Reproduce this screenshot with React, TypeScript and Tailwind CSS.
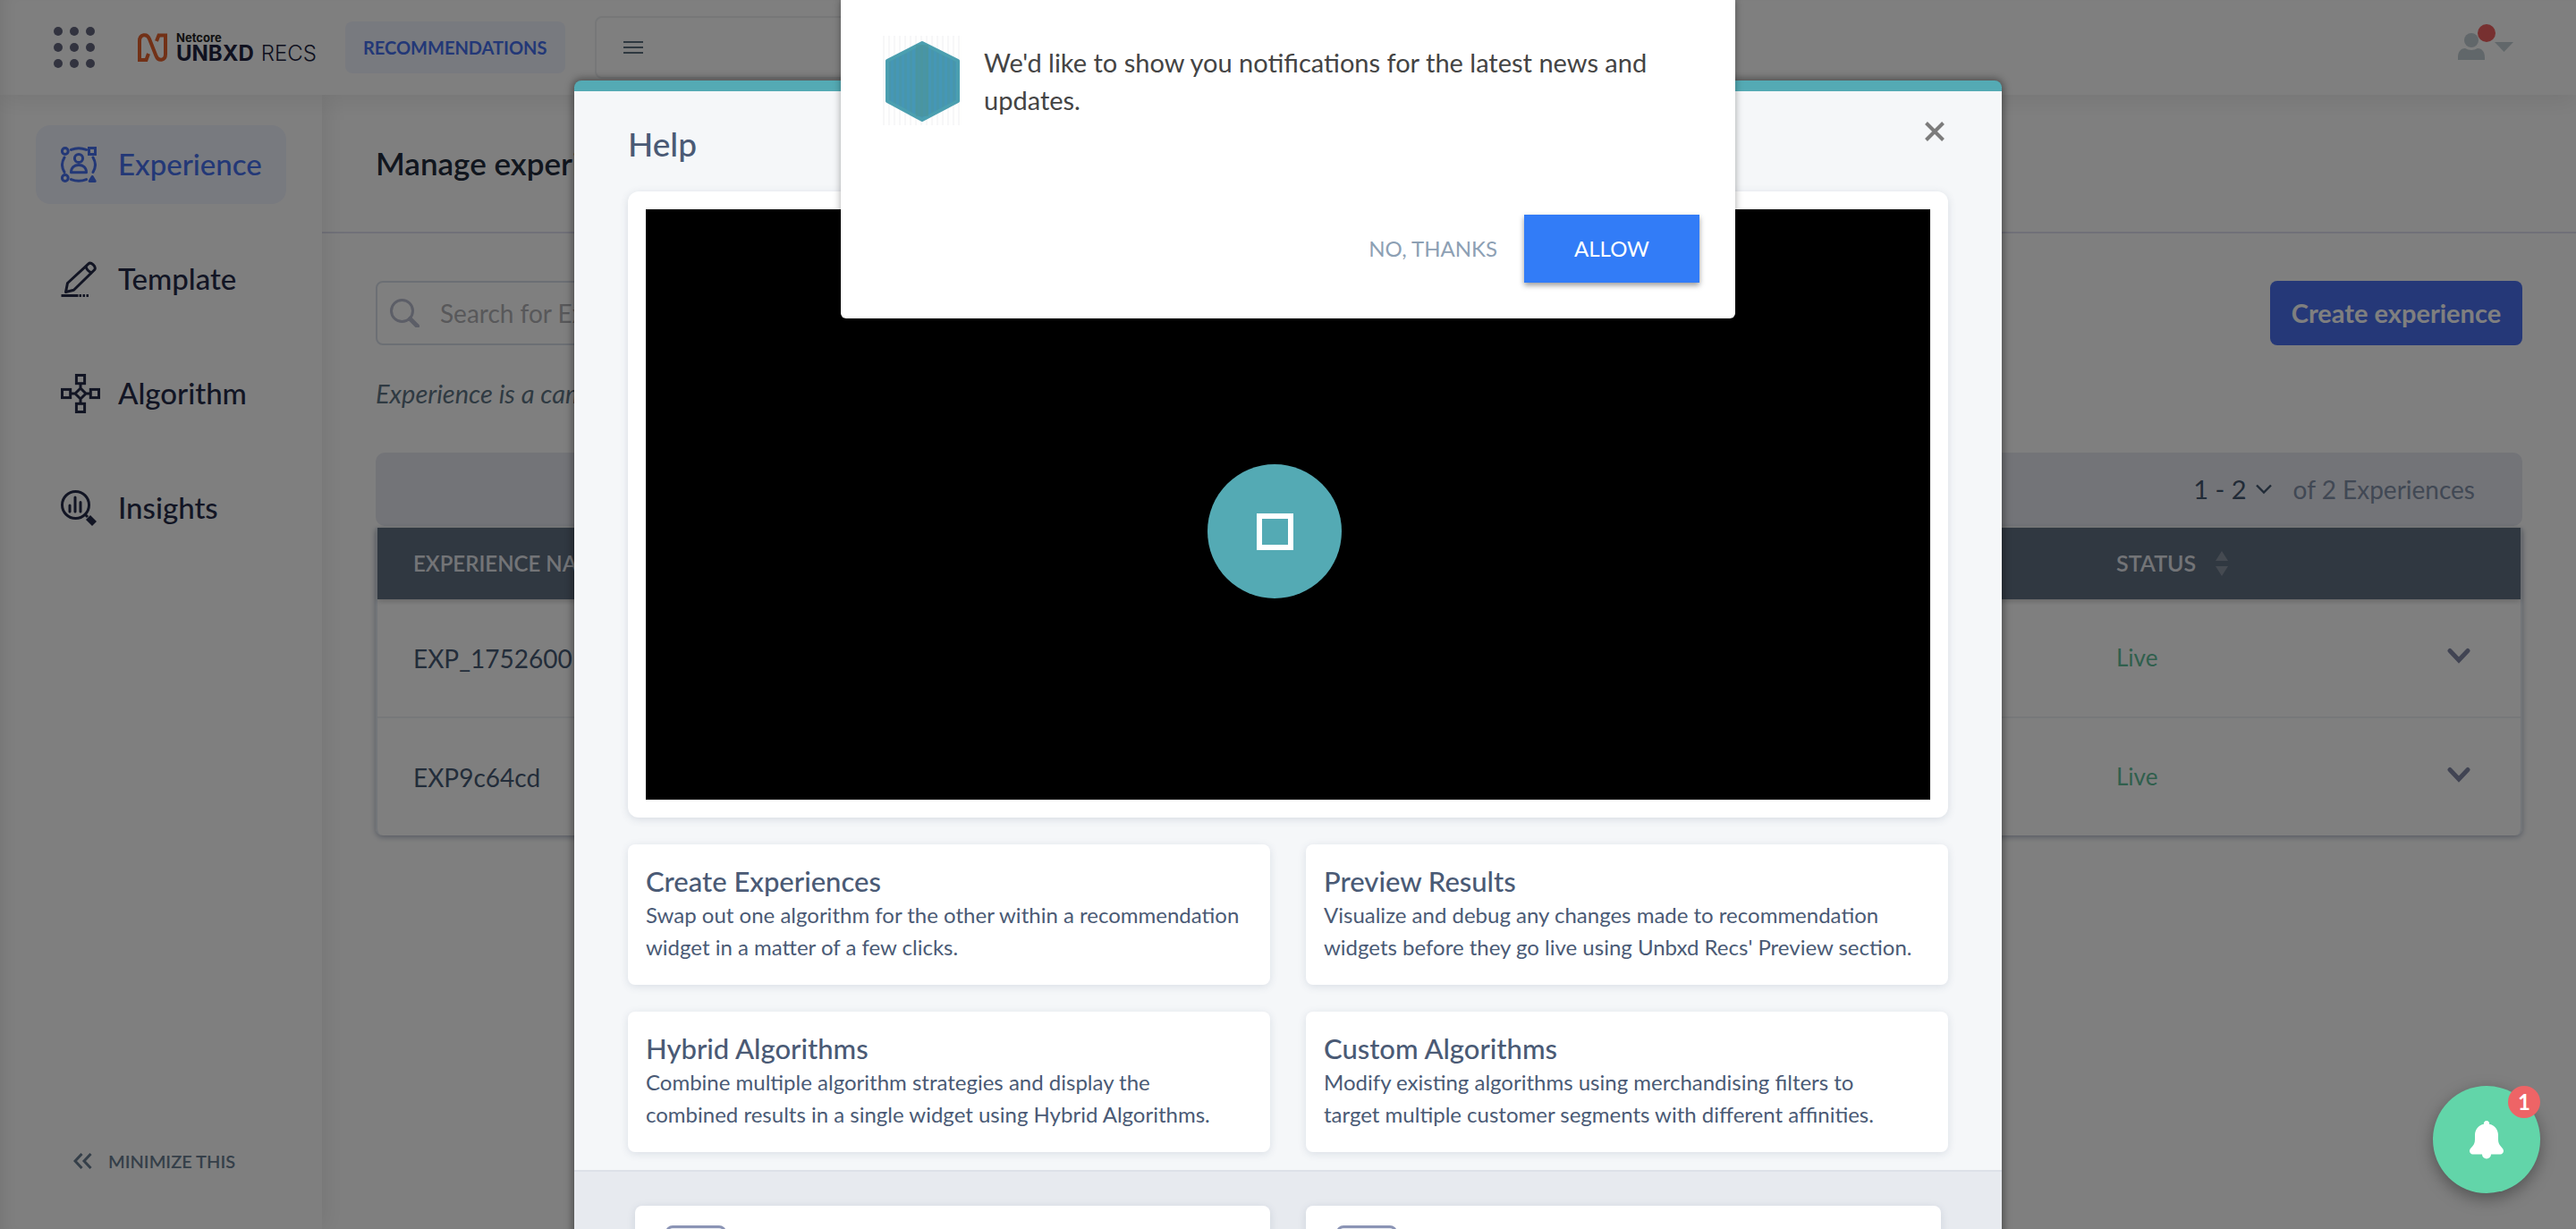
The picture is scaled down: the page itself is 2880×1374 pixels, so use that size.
import type { ReactNode } from 'react';

const logoFont = 'font-[Inter,sans-serif]';

function ExperienceIcon() {
  return (
    <svg viewBox="0 0 40 40" className="size-10" fill="none" stroke="currentColor" strokeWidth="3">
      <circle cx="4.800" cy="5" r="3.400" />
      <circle cx="4.800" cy="35" r="3.400" />
      <rect x="31.500" y="1.500" width="7" height="7" />
      <path d="M35.200 33.500l-3 5h6z" strokeLinejoin="round" />
      <path d="M11.500 3.400q8.500-3.400 17 0M11.500 36.600q8.500 3.400 17 0M4 12q-5 8.500 0 16.500M36 12q5 8.500 0 16.500" strokeLinecap="round" />
      <circle cx="20" cy="13" r="4.600" />
      <path d="M11.500 28.800c0-5.500 3.500-8.300 8.500-8.300s8.500 2.800 8.500 8.300z" strokeLinejoin="round" />
    </svg>
  );
}

function TemplateIcon() {
  return (
    <svg viewBox="0 0 40 40" className="size-10" fill="none" stroke="currentColor" strokeWidth="3" strokeLinejoin="round">
      <path d="M5.500 34.500l2-10L31 2.800c2.500-2.300 9 3.200 6.800 6.700L14.500 32.300z" />
      <path d="M28 6c1 4 3.500 6 7 7" />
      <path d="M0.500 38.500h19" />
      <path d="M20.500 38.500h2.500M24.500 38.500h2.500M28.500 38.500h2.500" />
    </svg>
  );
}

function AlgorithmIcon() {
  return (
    <svg viewBox="0 0 44 44" className="size-11" fill="none" stroke="currentColor" strokeWidth="3">
      <rect x="17.400" y="1.500" width="9.200" height="9.200" />
      <rect x="17.400" y="33.300" width="9.200" height="9.200" />
      <rect x="1.500" y="17.400" width="9.200" height="9.200" />
      <rect x="33.300" y="17.400" width="9.200" height="9.200" />
      <path d="M22 16l6 6-6 6-6-6zM22 10.700V16M22 28v5.300M10.700 22H16M28 22h5.300" />
    </svg>
  );
}

function InsightsIcon() {
  return (
    <svg viewBox="0 0 40 40" className="size-10" fill="none" stroke="currentColor" strokeWidth="3">
      <circle cx="16.500" cy="16.500" r="15" />
      <path d="M10 17v7M16 8v16M22 13.500V24" strokeLinecap="round" />
      <path d="M27 27l3 3" />
      <path d="M30.500 30.500l7 7" strokeWidth="7" />
    </svg>
  );
}

function NavItem({ icon, label, active = false }: { icon: ReactNode; label: string; active?: boolean }) {
  return (
    <a
      href="#"
      className={
        active
          ? 'flex h-[88px] items-center gap-5 rounded-2xl bg-[#f1f4ff] pl-7 text-[33px] font-medium text-[#4670ee]'
          : 'flex h-[88px] items-center gap-5 rounded-2xl pl-7 text-[33px] font-medium text-[#252b48]'
      }
    >
      <span className="flex w-11 shrink-0 items-center">{icon}</span>
      {label}
    </a>
  );
}

function Header() {
  return (
    <header className="relative z-10 flex h-[106px] shrink-0 items-center bg-white pl-[60px] pr-[70px] shadow-[0_8px_24px_rgba(0,0,0,0.07)]">
      <button aria-label="Apps" className="text-[#64677f]">
        <svg viewBox="0 0 46 46" className="size-[46px]" fill="currentColor">
          {[5, 23, 41].map((y) => [5, 23, 41].map((x) => <circle key={`${x}-${y}`} cx={x} cy={y} r="5" />))}
        </svg>
      </button>
      <div className="ml-12 flex items-center gap-2.5">
        <svg viewBox="0 0 33 32" className="h-8 w-[33px]" fill="none" stroke="#e4632f" strokeWidth="4">
          <path d="M12 23L9.500 30H2V9C2 1 10.500 0 13 6.500L20.500 25.500C23 32 31 31 31 23.500V2.500H23.500L21 9" />
        </svg>
        <div className={`${logoFont} text-[#20233f]`}>
          <div className="text-[13px] leading-[14px] font-bold text-[#222]">Netcore</div>
          <div className="flex gap-2 text-[24px] leading-[22px]">
            <span className="font-bold">UNBXD</span>
            <span className="font-light">RECS</span>
          </div>
        </div>
      </div>
      <span className="ml-8 flex h-[58px] items-center rounded-lg bg-[#f1f4ff] px-5 text-[20px] font-bold text-[#4670ee]">
        RECOMMENDATIONS
      </span>
      <button aria-label="Menu" className="ml-[33px] flex h-[70px] w-[900px] items-center rounded-lg border-2 border-[#eceef0] pl-[30px] text-[#5c7080]">
        <svg viewBox="0 0 22 16" className="h-4 w-[22px]" stroke="currentColor" strokeWidth="2">
          <path d="M0 2h22M0 8h22M0 14h22" />
        </svg>
      </button>
      <button aria-label="Account" className="mb-3 ml-auto text-[#c3ced4]">
        <svg viewBox="0 0 66 42" className="h-[42px] w-[66px]" fill="currentColor">
          <circle cx="19" cy="19" r="8" />
          <path d="M4 41v-3c0-7 4-10 8-10q7 4 14 0c4 0 8 3 8 10v3z" />
          <path d="M45 21h21L55.500 32z" />
          <circle cx="36" cy="11" r="10" fill="#ee6060" />
        </svg>
      </button>
    </header>
  );
}

function Sidebar() {
  return (
    <aside className="z-[5] flex w-[360px] shrink-0 flex-col justify-between bg-white px-10 pt-[34px] pb-14 shadow-[4px_0_24px_rgba(0,0,0,0.08)]">
      <nav className="flex flex-col gap-10">
        <NavItem icon={<ExperienceIcon />} label="Experience" active />
        <NavItem icon={<TemplateIcon />} label="Template" />
        <NavItem icon={<AlgorithmIcon />} label="Algorithm" />
        <NavItem icon={<InsightsIcon />} label="Insights" />
      </nav>
      <button className="flex items-center gap-[18px] self-start pl-[42px] text-[20px] leading-10 font-semibold text-[#6a7e92]">
        <svg viewBox="0 0 21 18" className="h-[18px] w-[21px]" fill="none" stroke="currentColor" strokeWidth="3">
          <path d="M9.500 1L2 9l7.500 8M19.500 1L12 9l7.500 8" />
        </svg>
        MINIMIZE THIS
      </button>
    </aside>
  );
}

function Row({ name }: { name: string }) {
  return (
    <tr className="h-[132px] border-b-2 border-[#eef0f4] last:border-b-0">
      <td className="pl-10 text-[28px] text-[#475a74]">{name}</td>
      <td className="pl-10 text-[26px] text-[#60bf9a]">Live</td>
      <td className="pr-14 text-right">
        <button aria-label={`Expand ${name}`} className="text-[#8288a6]">
          <svg viewBox="0 0 26 18" className="h-[18px] w-[26px]" fill="none" stroke="currentColor" strokeWidth="5" strokeLinecap="round">
            <path d="M3 3.500l10 10.500L23 3.500" />
          </svg>
        </button>
      </td>
    </tr>
  );
}

function Content() {
  return (
    <main className="min-w-0 flex-1">
      <div className="flex h-[155px] items-center border-b-2 border-[#e0e1f0] pl-[60px]">
        <h1 className="text-[35px] font-semibold text-[#222c3c]">Manage experiences</h1>
      </div>
      <div className="px-[60px] pt-[53px]">
        <div className="flex items-center justify-between">
          <label className="flex h-[72px] w-[700px] items-center gap-[23px] rounded-lg border-2 border-[#d8dee8] pl-3.5">
            <svg viewBox="0 0 33 32" className="h-8 w-[33px] shrink-0" fill="none" stroke="#b9bccf" strokeWidth="3">
              <circle cx="13.500" cy="13.500" r="12" />
              <path d="M22.500 22.500l8 8" strokeWidth="5" strokeLinecap="round" />
            </svg>
            <input
              aria-label="Search experiences"
              placeholder="Search for Experiences"
              className="w-full bg-transparent text-[28px] outline-none placeholder:text-[#b0b0b4]"
            />
          </label>
          <button className="h-[72px] w-[282px] rounded-lg bg-[#4b71f0] text-[29px] font-bold text-white">Create experience</button>
        </div>
        <p className="mt-[34px] mb-[46px] w-[900px] text-[29px] leading-10 text-[#5f7585] italic">Experience is a campaign created for a page</p>
        <div className="flex h-[82px] items-center justify-end gap-6 rounded-[10px] bg-[#e6e8f1] pr-[53px] text-[28px]">
          <button className="flex items-center gap-2.5 text-[29px] text-[#43566f]">
            1 - 2
            <svg viewBox="0 0 18 12" className="h-3 w-[18px]" fill="none" stroke="currentColor" strokeWidth="2.400">
              <path d="M1 1.500l8 8 8-8" />
            </svg>
          </button>
          <span className="text-[#8291a8]">of 2 Experiences</span>
        </div>
        <div className="mt-0.5 rounded-b-lg border-x-2 border-[#e4eaf2] shadow-[0_2px_6px_rgba(50,70,110,0.4)]">
          <table className="w-full border-collapse text-left">
            <thead className="bg-[#607083] text-[#e6e9ee] shadow-[0_2px_6px_rgba(0,0,0,0.2)]">
              <tr className="h-20">
                <th className="pl-10 text-[24px] font-semibold">EXPERIENCE NAME</th>
                <th className="w-[300px] pl-10 text-[25px] font-semibold">
                  <span className="flex items-center gap-[22px]">
                    STATUS
                    <svg viewBox="0 0 14 28" className="h-7 w-3.5" fill="#8a95a3">
                      <path d="M7 0l7 11H0zM7 28l7-11H0z" />
                    </svg>
                  </span>
                </th>
                <th className="w-[192px]" />
              </tr>
            </thead>
            <tbody>
              <Row name="EXP_1752600" />
              <Row name="EXP9c64cd" />
            </tbody>
          </table>
        </div>
      </div>
    </main>
  );
}

const features = [
  { title: 'Create Experiences', lines: ['Swap out one algorithm for the other within a recommendation', 'widget in a matter of a few clicks.'] },
  { title: 'Preview Results', lines: ['Visualize and debug any changes made to recommendation', "widgets before they go live using Unbxd Recs' Preview section."] },
  { title: 'Hybrid Algorithms', lines: ['Combine multiple algorithm strategies and display the', 'combined results in a single widget using Hybrid Algorithms.'] },
  { title: 'Custom Algorithms', lines: ['Modify existing algorithms using merchandising filters to', 'target multiple customer segments with different affinities.'] },
];

function DocCard() {
  return (
    <div className="h-40 rounded-lg bg-white px-[34px] pt-[22px] shadow-[0_2px_10px_rgba(60,80,110,0.14)]">
      <div className="h-20 w-[68px] rounded-lg border-[3px] border-[#8b94b5] bg-[#e9ebf3]" />
    </div>
  );
}

function HelpDialog() {
  return (
    <section role="dialog" aria-label="Help" className="w-full max-w-[1596px] rounded-t-lg border-t-[12px] border-[#54aab4] bg-[#f5f7f9] text-[#4a5a75] shadow-[0_0_8px_2px_rgba(0,0,0,0.4)]">
      <div className="flex h-28 justify-between px-[60px] pt-[34px]">
        <h2 className="text-[37px] leading-[50px] font-medium">Help</h2>
        <button aria-label="Close" className="mr-1 size-[22px] text-[#7c7c7c]">
          <svg viewBox="0 0 22 22" className="size-[22px]" stroke="currentColor" strokeWidth="4">
            <path d="M1.500 1.500l19 19M20.500 1.500l-19 19" />
          </svg>
        </button>
      </div>
      <div className="px-[60px] pb-5">
        <div className="rounded-xl bg-white p-5 shadow-[0_2px_10px_rgba(60,80,110,0.16)]">
          <div className="flex h-[660px] items-center justify-center bg-black pt-[60px] pr-[30px]">
            <button aria-label="Play video" className="flex size-[150px] items-center justify-center rounded-full bg-[#54aab4]">
              <span className="size-[41px] border-[6px] border-white" />
            </button>
          </div>
        </div>
        <div className="mt-[30px] grid grid-cols-2 gap-x-10 gap-y-[30px]">
          {features.map((f) => (
            <article key={f.title} className="rounded-lg bg-white px-5 pt-[21px] pb-6 shadow-[0_2px_10px_rgba(60,80,110,0.14)]">
              <h3 className="text-[31px] leading-10 font-medium">{f.title}</h3>
              <p className="text-[24px] leading-9">
                {f.lines[0]}
                <br />
                {f.lines[1]}
              </p>
            </article>
          ))}
        </div>
      </div>
      <div className="grid grid-cols-2 gap-10 border-t-2 border-[#dde1e8] bg-[#e7eaef] px-[68px] pt-[38px] pb-10">
        <DocCard />
        <DocCard />
      </div>
    </section>
  );
}

function NotificationPrompt() {
  return (
    <section role="alertdialog" aria-label="Notifications" className="flex min-h-[356px] w-full max-w-[1000px] flex-col justify-between rounded-b-md bg-white p-10 shadow-[0_0_8px_rgba(0,0,0,0.35)]">
      <div className="flex gap-[25px] pl-[7px]">
        <svg viewBox="0 0 88 100" className="h-[100px] w-[88px] shrink-0">
          <defs>
            <pattern id="stripes" width="6" height="100" patternUnits="userSpaceOnUse">
              <rect width="6" height="100" fill="#4597b6" />
              <rect width="3" height="100" fill="#4896ab" />
            </pattern>
            <pattern id="paper" width="6" height="100" patternUnits="userSpaceOnUse">
              <rect width="6" height="100" fill="#fefefe" />
              <rect width="2" height="100" fill="#f7f7f8" />
            </pattern>
          </defs>
          <rect width="88" height="100" fill="url(#paper)" />
          <path d="M44 8L84 28v45L44 94 5 73V28z" fill="url(#stripes)" stroke="#4b9fb0" strokeWidth="4" strokeLinejoin="round" />
          <rect x="37" y="10" width="14" height="80" fill="#4b9496" opacity="0.5" />
        </svg>
        <p className="max-w-[790px] pt-[9px] text-[29px] leading-[42px] text-[#444]">
          We'd like to show you notifications for the latest news and updates.
        </p>
      </div>
      <div className="flex items-center justify-end gap-[30px] text-[24px]">
        <button className="text-[#8da0b4]">NO, THANKS</button>
        <button className="h-[76px] w-[196px] bg-[#327cf7] text-white shadow-[0_3px_6px_rgba(0,0,0,0.4)]">ALLOW</button>
      </div>
    </section>
  );
}

export default function App() {
  return (
    <div className="relative h-screen overflow-hidden bg-white font-[Lato,sans-serif]">
      <div className="flex h-full flex-col">
        <Header />
        <div className="flex min-h-0 flex-1">
          <Sidebar />
          <Content />
        </div>
      </div>

      <div className="absolute inset-0 z-20 flex items-start justify-center bg-black/50 pt-[90px] shadow-[inset_16px_0_16px_-12px_rgba(0,0,0,0.08)]">
        <HelpDialog />
      </div>

      <div className="absolute inset-x-0 top-0 z-30 flex justify-center">
        <NotificationPrompt />
      </div>

      <button
        aria-label="Notifications"
        className="absolute right-10 bottom-10 z-40 flex size-[120px] items-center justify-center rounded-full bg-[#62d5a9] shadow-[0_6px_18px_rgba(0,0,0,0.35)]"
      >
        <svg viewBox="0 0 38 43" className="h-[43px] w-[38px]" fill="#fff">
          <path d="M19 0a3 3 0 0 1 3 3.800C28 5 32 10 32 16v5c0 4 1.500 6.500 4.500 9.500 3 3 1 7-2 7H24a5 5 0 0 1-10 0H3.500c-3 0-5-4-2-7C4.500 27.500 6 25 6 21v-5c0-6 4-11 10-12.200A3 3 0 0 1 19 0z" />
        </svg>
        <span className="absolute top-0 right-0 flex size-9 items-center justify-center rounded-full bg-[#ee6466] text-[24px] font-bold text-white">
          1
        </span>
      </button>
    </div>
  );
}
